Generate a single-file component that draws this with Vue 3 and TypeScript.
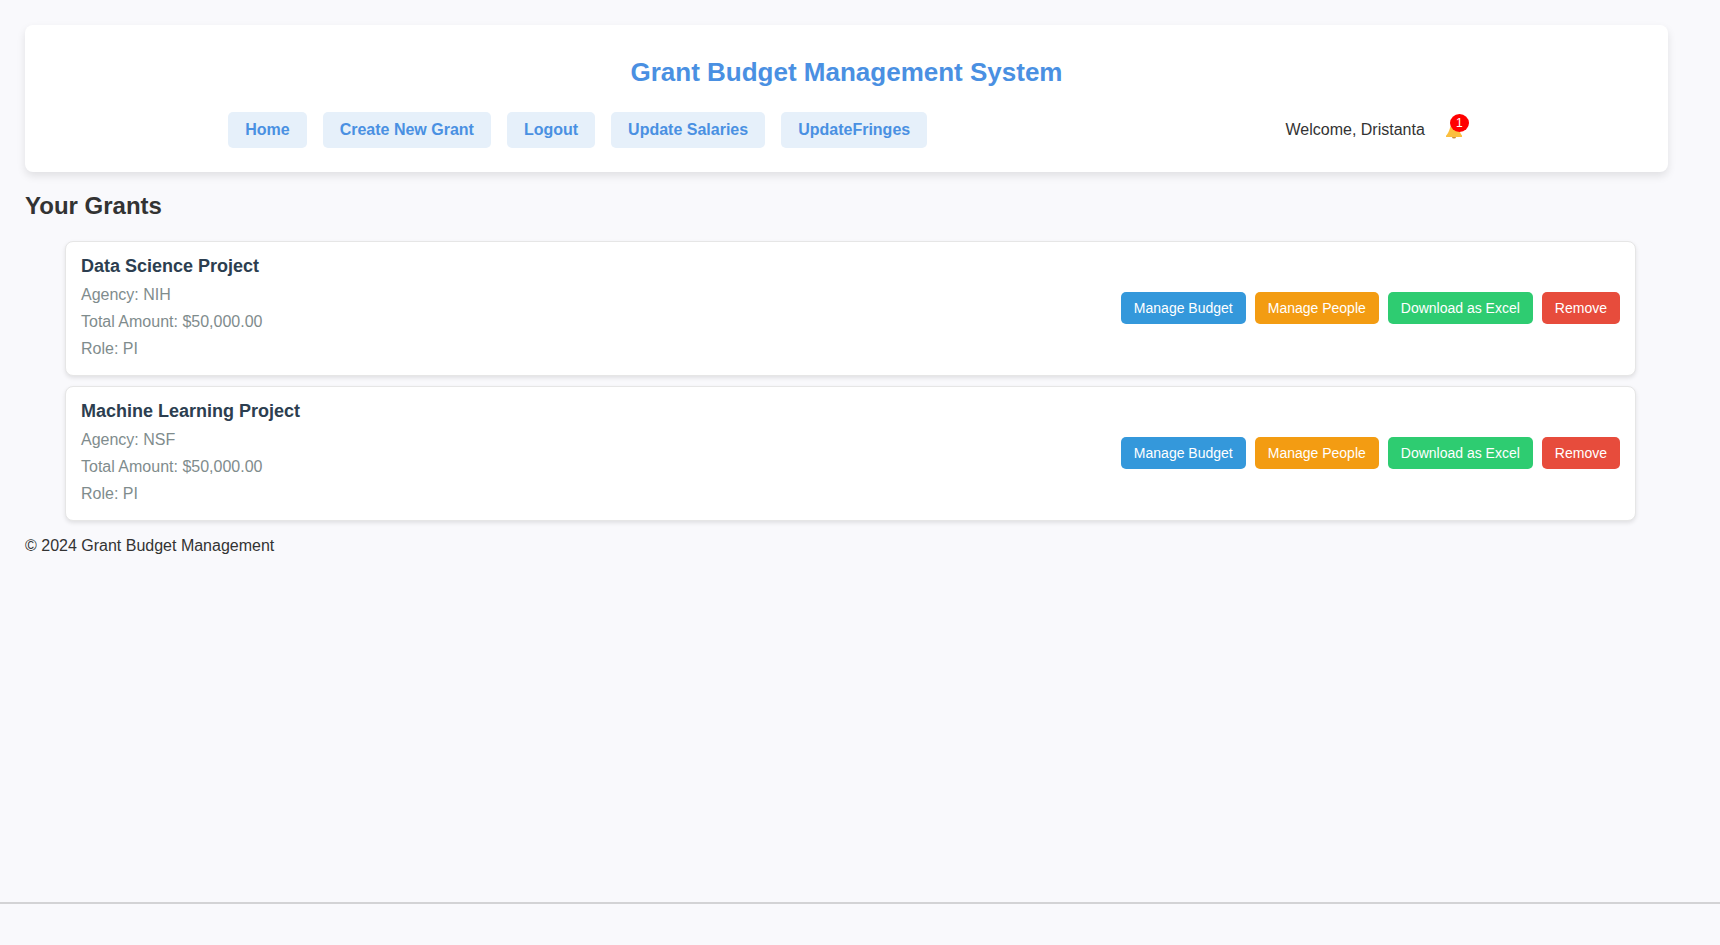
<script setup lang="ts">
interface NavLink {
  label: string
  href: string
}

interface Grant {
  id: number
  title: string
  agency: string
  total: number
  role: string
}

const links: NavLink[] = [
  { label: 'Home', href: '#home' },
  { label: 'Create New Grant', href: '#create' },
  { label: 'Logout', href: '#logout' },
  { label: 'Update Salaries', href: '#salaries' },
  { label: 'UpdateFringes', href: '#fringes' },
]

const grants: Grant[] = [
  { id: 1, title: 'Data Science Project', agency: 'NIH', total: 50000, role: 'PI' },
  { id: 2, title: 'Machine Learning Project', agency: 'NSF', total: 50000, role: 'PI' },
]

const userName = 'Dristanta'
const unread = 1

const money = (value: number): string =>
  value.toLocaleString('en-US', { style: 'currency', currency: 'USD' })
</script>

<template>
  <div class="page">
    <div class="content">
      <header class="header">
        <h1 class="brand">Grant Budget Management System</h1>
        <div class="bar">
          <nav class="nav">
            <a v-for="link in links" :key="link.label" class="nav-link" :href="link.href">{{ link.label }}</a>
          </nav>
          <div class="user">
            <span>Welcome, {{ userName }}</span>
            <button class="bell" type="button" aria-label="Notifications">
              <svg class="bell-icon" viewBox="0 0 20 20" aria-hidden="true">
                <path d="M7 17h4a2 1.500 0 0 1-4 0z" fill="#c98f3a" />
                <path
                  d="M10 3c2.500 0 4 2 4.300 5 .3 3.500 1 5.500 2.700 7.500V17H1v-1.300c1.800-1.500 2.900-4.200 4-7.700C5.900 5 7.500 3 10 3z"
                  fill="#fbbf3f"
                />
              </svg>
              <span class="badge">{{ unread }}</span>
            </button>
          </div>
        </div>
      </header>

      <main>
        <h2 class="heading">Your Grants</h2>
        <ul class="grants">
          <li v-for="grant in grants" :key="grant.id" class="grant">
            <div>
              <h3 class="grant-title">{{ grant.title }}</h3>
              <p class="detail">Agency: {{ grant.agency }}</p>
              <p class="detail">Total Amount: {{ money(grant.total) }}</p>
              <p class="detail">Role: {{ grant.role }}</p>
            </div>
            <div class="actions">
              <button class="action budget" type="button">Manage Budget</button>
              <button class="action people" type="button">Manage People</button>
              <button class="action download" type="button">Download as Excel</button>
              <button class="action remove" type="button">Remove</button>
            </div>
          </li>
        </ul>
      </main>

      <footer class="footer">© 2024 Grant Budget Management</footer>
    </div>
    <div class="bottom-strip"></div>
  </div>
</template>

<style>
body {
  background: #f9f9fc;
}
</style>

<style scoped>
.page {
  box-sizing: border-box;
  min-height: 100vh;
  display: flex;
  flex-direction: column;
  color: #333;
  font-family: Arial, "Liberation Sans", sans-serif;
  font-size: 16px;
  line-height: 20px;
}

.content {
  flex: 1;
  padding: 25px 52px 0 25px;
}

.header {
  padding: 32px 24px 24px;
  background: #fff;
  border-radius: 8px;
  box-shadow: 0 4px 8px rgba(0, 0, 0, 0.1);
}

.brand {
  margin: 0 0 24px;
  color: #4a90e2;
  font-size: 26px;
  line-height: 31px;
  text-align: center;
}

.bar {
  display: flex;
  align-items: center;
  justify-content: space-around;
}

.nav {
  display: flex;
  gap: 16px;
}

.nav-link {
  padding: 8px 17px;
  border-radius: 5px;
  background: #e6f0fa;
  color: #4a90e2;
  font-weight: bold;
  text-decoration: none;
}

.user {
  display: flex;
  align-items: center;
  gap: 20px;
}

.bell {
  position: relative;
  display: flex;
  padding: 0;
  border: 0;
  background: none;
  font: inherit;
}

.bell-icon {
  width: 20px;
  height: 20px;
}

.badge {
  position: absolute;
  top: -6px;
  right: -4px;
  width: 19px;
  border-radius: 50%;
  background: #f00;
  color: #fff;
  font-size: 12px;
  line-height: 18px;
  text-align: center;
}

.heading {
  margin: 19px 0 20px;
  font-size: 24px;
  line-height: 30px;
}

.grants {
  display: flex;
  flex-direction: column;
  gap: 10px;
  margin: 0;
  padding: 0 32px 0 40px;
  list-style: none;
}

.grant {
  display: flex;
  align-items: center;
  justify-content: space-between;
  padding: 14px 15px 16px;
  border: 1px solid #e6e6e6;
  border-radius: 8px;
  background: #fff;
  box-shadow: 0 2px 4px rgba(0, 0, 0, 0.1);
}

.grant-title {
  margin: 0 0 9px;
  color: #2c3e50;
  font-size: 18px;
  line-height: 20px;
}

.detail {
  margin: 0 0 7px;
  color: #7f8c8d;
}

.detail:last-child {
  margin-bottom: 0;
}

.actions {
  display: flex;
  gap: 9px;
}

.action {
  padding: 8px 13px;
  border: 0;
  border-radius: 5px;
  color: #fff;
  font-family: inherit;
  font-size: 14px;
  line-height: 16px;
}

.budget {
  background: #3498db;
}

.people {
  background: #f39c12;
}

.download {
  background: #2ecc71;
}

.remove {
  background: #e74c3c;
}

.footer {
  margin-top: 15px;
}

.bottom-strip {
  height: 41px;
  border-top: 2px solid #d3d3d5;
}
</style>
